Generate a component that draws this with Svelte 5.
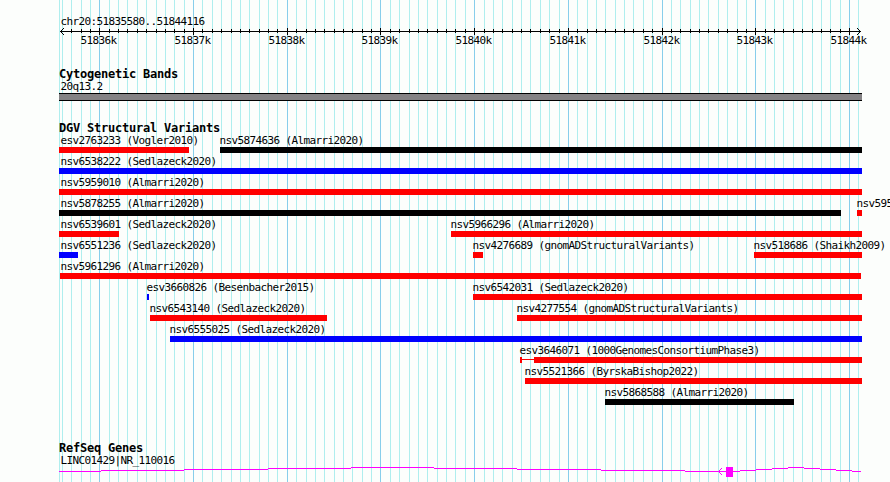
<script lang="ts">
    interface Feature {
        name: string;
        start: number;
        end: number;
        color: string;
        thinTo?: number;
    }

    const left = 59;
    const right = 862;

    // 100 bp between grid lines, every tenth one is a labelled kilobase
    const step = 9.371;
    const grid = Array.from({ length: 86 }, (_, i) => ({
        x: Math.round(99.34 + (i - 4) * step),
        major: (i - 4) % 10 === 0,
        label: `${51836 + (i - 4) / 10}k`
    }));

    const rows: Feature[][] = [
        [
            { name: 'esv2763233 (Vogler2010)', start: 59, end: 189, color: 'red' },
            { name: 'nsv5874636 (Almarri2020)', start: 220, end: 862, color: 'black' }
        ],
        [{ name: 'nsv6538222 (Sedlazeck2020)', start: 59, end: 862, color: 'blue' }],
        [{ name: 'nsv5959010 (Almarri2020)', start: 59, end: 862, color: 'red' }],
        [
            { name: 'nsv5878255 (Almarri2020)', start: 59, end: 841, color: 'black' },
            { name: 'nsv595', start: 857, end: 862, color: 'red' }
        ],
        [
            { name: 'nsv6539601 (Sedlazeck2020)', start: 59, end: 119, color: 'red' },
            { name: 'nsv5966296 (Almarri2020)', start: 451, end: 862, color: 'red' }
        ],
        [
            { name: 'nsv6551236 (Sedlazeck2020)', start: 59, end: 78, color: 'blue' },
            { name: 'nsv4276689 (gnomADStructuralVariants)', start: 473, end: 483, color: 'red' },
            { name: 'nsv518686 (Shaikh2009)', start: 754, end: 862, color: 'red' }
        ],
        [{ name: 'nsv5961296 (Almarri2020)', start: 60, end: 861, color: 'red' }],
        [
            { name: 'esv3660826 (Besenbacher2015)', start: 147, end: 149, color: 'blue' },
            { name: 'nsv6542031 (Sedlazeck2020)', start: 473, end: 862, color: 'red' }
        ],
        [
            { name: 'nsv6543140 (Sedlazeck2020)', start: 150, end: 327, color: 'red' },
            { name: 'nsv4277554 (gnomADStructuralVariants)', start: 517, end: 862, color: 'red' }
        ],
        [{ name: 'nsv6555025 (Sedlazeck2020)', start: 170, end: 862, color: 'blue' }],
        [{ name: 'esv3646071 (1000GenomesConsortiumPhase3)', start: 520, end: 862, color: 'red', thinTo: 534 }],
        [{ name: 'nsv5521366 (ByrskaBishop2022)', start: 525, end: 862, color: 'red' }],
        [{ name: 'nsv5868588 (Almarri2020)', start: 605, end: 794, color: 'black' }]
    ];

    // intron line, one pixel high per segment: [from, to, y]
    const intron = [
        [59, 101, 471], [101, 184, 470], [184, 268, 469], [268, 351, 468],
        [351, 434, 467], [434, 517, 468], [517, 601, 469], [601, 685, 470],
        [685, 740, 471], [740, 756, 470], [756, 772, 469], [772, 788, 468],
        [788, 804, 467], [804, 820, 468], [820, 836, 469], [836, 852, 470],
        [852, 861, 471]
    ];

    // arrowheads: tip position and the direction the arms run
    const arrows = [
        { x: 60, y: 31, dir: 1, color: 'black' },
        { x: 860, y: 31, dir: -1, color: 'black' },
        { x: 718, y: 471, dir: 1, color: 'gene' }
    ];

    const labelX = (f: Feature) => Math.max(60.4, f.start - 0.4);
</script>

<svg class="browser" width="890" height="482" viewBox="0 0 890 482">
    <!-- Grid -->
    <rect x={left} y="0" width="1" height="482" class="minor" />
    {#each grid as line}
        <rect x={line.x} y="0" width="1" height="482" class={line.major ? 'major' : 'minor'} />
    {/each}

    <!-- Ruler -->
    <text x="60.4" y="25">chr20:51835580..51844116</text>
    <rect x="60" y="31" width="801" height="1" />
    {#each grid as line}
        {#if line.major}
            <rect x={line.x} y="28" width="1" height="7" />
            <text x={line.x - 18.6} y="44">{line.label}</text>
        {:else if line.x > 62 && line.x < 858}
            <rect x={line.x} y="29" width="1" height="4" />
        {/if}
    {/each}

    <!-- Cytogenetic band -->
    <text x="59" y="78" class="title">Cytogenetic Bands</text>
    <text x="60.4" y="90">20q13.2</text>
    <rect x={left} y="93" width={right - left} height="8" />
    <rect x={left} y="94" width={right - left} height="6" class="band" />

    <!-- Structural variants -->
    <text x="59" y="132" class="title">DGV Structural Variants</text>
    {#each rows as row, i}
        {#each row as f}
            <text x={labelX(f)} y={144 + i * 21}>{f.name}</text>
            {#if f.thinTo}
                <rect x={f.start} y={147 + i * 21} width="2" height="6" class={f.color} />
                <rect x={f.start} y={149 + i * 21} width={f.thinTo - f.start} height="1" class={f.color} />
            {/if}
            <rect
                x={f.thinTo ?? f.start}
                y={147 + i * 21}
                width={f.end - (f.thinTo ?? f.start)}
                height="6"
                class={f.color}
            />
        {/each}
    {/each}

    <!-- Genes -->
    <text x="59" y="452" class="title">RefSeq Genes</text>
    <text x="60.4" y="464">LINC01429|NR_110016</text>
    {#each intron as [from, to, y]}
        <rect x={from} {y} width={to - from} height="1" class="gene" />
    {/each}
    <rect x="726" y="467" width="7" height="10" class="gene" />

    {#each arrows as a}
        {#each [1, 2, 3] as d}
            <rect x={a.x + a.dir * d} y={a.y - d} width="1" height="1" class={a.color} />
            <rect x={a.x + a.dir * d} y={a.y + d} width="1" height="1" class={a.color} />
        {/each}
    {/each}
</svg>

<style>
    :global(body) {
        margin: 0;
        background: #fcfefc;
    }

    .browser {
        display: block;
        shape-rendering: crispEdges;
    }

    text {
        font-family: "DejaVu Sans Mono", monospace;
        font-size: 11px;
        letter-spacing: -0.622px;
        white-space: pre;
        fill: #000;
    }

    .title {
        font-size: 12px;
        font-weight: bold;
        letter-spacing: -0.224px;
    }

    .minor {
        fill: #afeeee;
    }

    .major {
        fill: #87ceeb;
    }

    .band {
        fill: #848284;
    }

    .red {
        fill: #f00;
    }

    .blue {
        fill: #00f;
    }

    .black {
        fill: #000;
    }

    .gene {
        fill: #f0f;
    }
</style>
